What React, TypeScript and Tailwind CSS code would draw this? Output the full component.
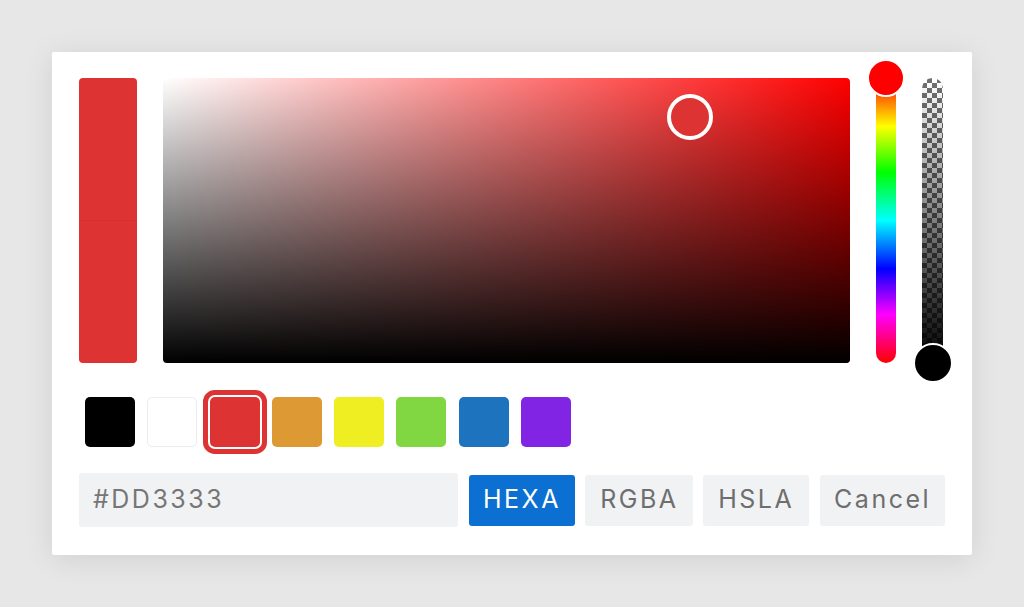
import React from "react";

const swatches = ["#000000", "#ffffff", "#dd3333", "#dd9933", "#eeee22", "#81d742", "#1e73be", "#8224e3"];

export default function App() {
  return (
    <div className="w-[1024px] h-[607px] bg-[#e7e7e7] flex items-start justify-start pt-[52px] pl-[52px] font-['Inter','Liberation_Sans',sans-serif]">
      <div className="w-[920px] h-[503px] bg-white rounded-[2px] shadow-[0_4px_30px_rgba(0,0,0,0.10)] pt-[26px] px-[27px] flex flex-col">
        {/* top row */}
        <div className="flex h-[285px]">
          <div className="w-[58px] h-full rounded-[4px] overflow-hidden flex flex-col">
            <div className="flex-1 bg-[#dd3333]" />
            <div className="h-px bg-[#d83030]" />
            <div className="flex-1 bg-[#dd3333]" />
          </div>
          <div className="ml-[26px] w-[687px] h-full rounded-[4px] relative bg-[linear-gradient(to_right,#ffffff,#ff0000)]">
            <div className="absolute inset-0 rounded-[4px] bg-[linear-gradient(to_top,#000000,rgba(0,0,0,0))]" />
            <div className="absolute left-[504px] top-[16px] w-[46px] h-[46px] rounded-full border-[4px] border-white bg-[#dd3333]" />
          </div>
          <div className="ml-[26px] w-[20px] h-full relative rounded-full bg-[linear-gradient(to_bottom,#ff0000_0%,#ffff00_17%,#00ff00_33%,#00ffff_50%,#0000ff_67%,#ff00ff_83%,#ff0000_100%)]">
            <div className="absolute left-[-9px] top-[-19px] w-[38px] h-[38px] rounded-full bg-[#ff0000] border-[2px] border-white" />
          </div>
          <div className="ml-[26px] w-[21px] h-full relative">
            <div className="absolute inset-0 rounded-t-full bg-[repeating-conic-gradient(#707070_0%_25%,#ffffff_0%_50%)] bg-[length:10px_10px]" />
            <div className="absolute inset-0 rounded-t-full bg-[linear-gradient(to_bottom,rgba(0,0,0,0),#000000)]" />
            <div className="absolute left-[-9.5px] bottom-[-20px] w-[40px] h-[40px] rounded-full bg-black border-[2px] border-white" />
          </div>
        </div>
        {/* swatches */}
        <div className="mt-[34px] ml-[6px] flex gap-[12.3px]">
          {swatches.map((c, i) => (
            <div
              key={c}
              className={
                i === 1
                  ? "w-[50px] h-[50px] rounded-[5px] border border-[#ececec] bg-white"
                  : i === 2
                  ? "w-[50px] h-[50px] rounded-[5px] bg-[#dd3333] shadow-[0_0_0_2px_#ffffff,0_0_0_7px_#dd3333]"
                  : "w-[50px] h-[50px] rounded-[5px]"
              }
              style={i === 1 || i === 2 ? undefined : { backgroundColor: c }}
            />
          ))}
        </div>
        {/* input row */}
        <div className="mt-[26px] flex items-center h-[54px]">
          <div className="w-[379px] h-[54px] rounded-[3px] bg-[#f1f2f4] flex items-center pl-[14px] text-[25px] tracking-[2.5px] text-[#767676]">
            #DD3333
          </div>
          <div className="ml-[11px] w-[107px] h-[51px] rounded-[3px] bg-[#0b70d1] text-white flex items-center justify-center text-[25px] tracking-[2.5px]">
            HEXA
          </div>
          <div className="ml-[10px] w-[108px] h-[51px] rounded-[3px] bg-[#f1f2f4] text-[#6e6e6e] flex items-center justify-center text-[25px] tracking-[2.5px]">
            RGBA
          </div>
          <div className="ml-[10px] w-[106px] h-[51px] rounded-[3px] bg-[#f1f2f4] text-[#6e6e6e] flex items-center justify-center text-[25px] tracking-[2.5px]">
            HSLA
          </div>
          <div className="ml-[11px] w-[125px] h-[51px] rounded-[3px] bg-[#f1f2f4] text-[#6e6e6e] flex items-center justify-center text-[25px] tracking-[2.5px]">
            Cancel
          </div>
        </div>
      </div>
    </div>
  );
}
